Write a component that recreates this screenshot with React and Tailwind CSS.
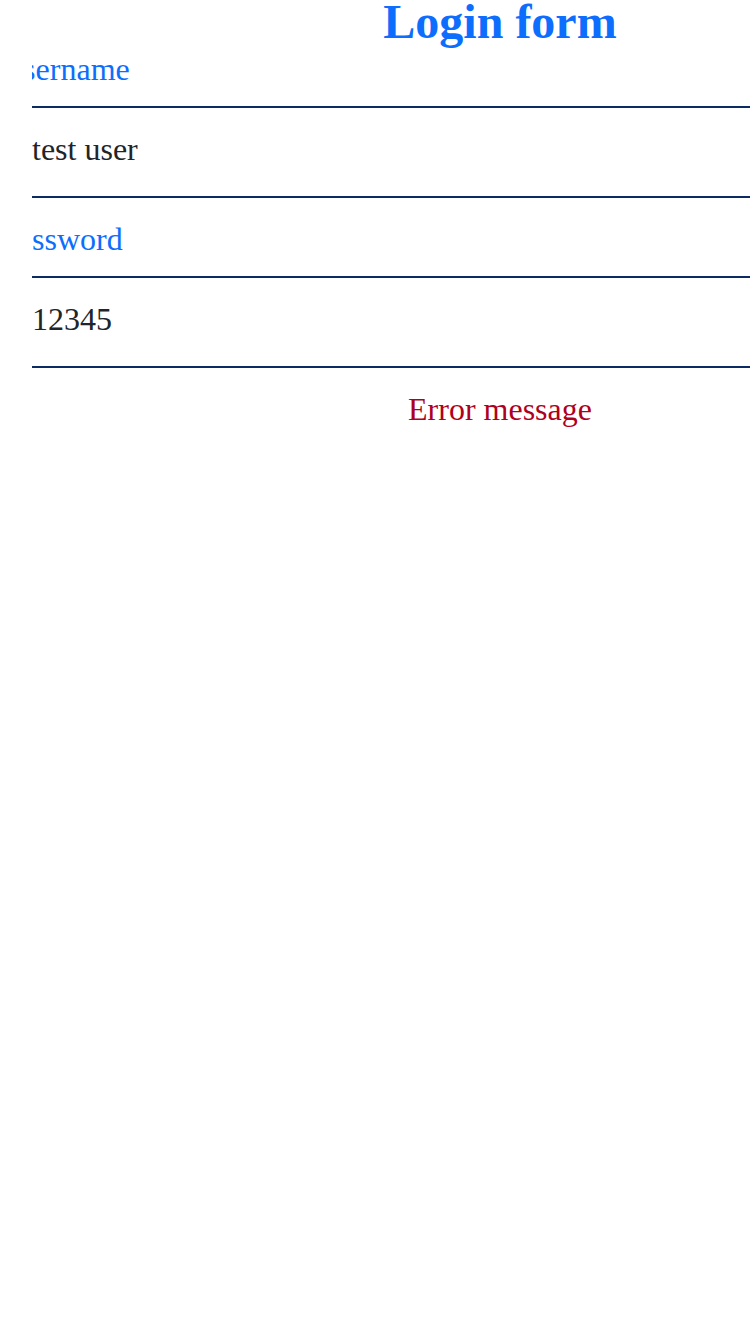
import { useState } from "react";

const LoginForm = () => {
  const [username, setUsername] = useState("test user");
  const [password, setPassword] = useState("12345");

  return (
    <div className="w-full overflow-hidden bg-white min-h-[1334px] font-['Liberation_Serif',serif]">
      <div className="w-[1000px] px-8">
        <h1 className="text-center text-[48px] leading-[44px] font-bold text-[#0d6efd] mb-[-16px]">
          Login form
        </h1>
        <form className="overflow-hidden" onSubmit={(e) => e.preventDefault()}>
          <div className="pt-[23px] pb-[18px] border-b-2 border-[#0b2b63]">
            <label
              htmlFor="username"
              className="block -ml-8 text-[32px] leading-[37px] text-[#0d6efd]"
            >
              Username
            </label>
          </div>
          <input
            id="username"
            value={username}
            onChange={(e) => setUsername(e.target.value)}
            className="block w-full pt-[23px] pb-[28px] h-[90px] text-[32px] leading-[37px] text-[#212529] border-b-2 border-[#0b2b63] outline-none bg-transparent"
          />
          <div className="pt-[23px] pb-[18px] border-b-2 border-[#0b2b63]">
            <label
              htmlFor="password"
              className="block -ml-8 text-[32px] leading-[37px] text-[#0d6efd]"
            >
              Password
            </label>
          </div>
          <input
            id="password"
            value={password}
            onChange={(e) => setPassword(e.target.value)}
            className="block w-full pt-[23px] pb-[28px] h-[90px] text-[32px] leading-[37px] text-[#212529] border-b-2 border-[#0b2b63] outline-none bg-transparent"
          />
          <p className="pt-[23px] text-center text-[32px] leading-[37px] text-[#b00020]">
            Error message
          </p>
        </form>
      </div>
    </div>
  );
};

export default LoginForm;
